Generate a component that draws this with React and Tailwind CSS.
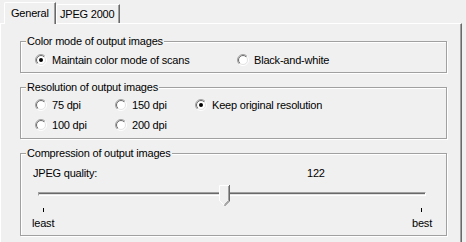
import React from "react";

const Radio = ({ checked }) => (
  <svg width="12" height="12" viewBox="0 0 12 12" className="shrink-0">
    <defs>
      <linearGradient id="rOuter" x1="0" y1="0" x2="1" y2="1">
        <stop offset="0.5" stopColor="#a0a0a0" />
        <stop offset="0.5" stopColor="#ffffff" />
      </linearGradient>
      <linearGradient id="rInner" x1="0" y1="0" x2="1" y2="1">
        <stop offset="0.5" stopColor="#696969" />
        <stop offset="0.5" stopColor="#e3e3e3" />
      </linearGradient>
    </defs>
    <circle cx="6" cy="6" r="5.5" fill="none" stroke="url(#rOuter)" />
    <circle cx="6" cy="6" r="4.5" fill="#ffffff" stroke="url(#rInner)" />
    {checked && <circle cx="6" cy="6" r="2" fill="#000000" />}
  </svg>
);

const Option = ({ label, checked, width }) => (
  <div className={`flex h-[12px] items-center ${width}`}>
    <Radio checked={checked} />
    <span className="ml-[5px] whitespace-nowrap leading-[13px]">{label}</span>
  </div>
);

const Group = ({ label, className, children }) => (
  <div
    className={`relative w-[427px] border border-[#a0a0a0] shadow-[inset_1px_1px_0_#fff,1px_1px_0_#fff] ${className}`}
  >
    <span className="absolute left-[5px] top-[-7px] whitespace-nowrap bg-[#f0f0f0] px-px leading-[13px]">
      {label}
    </span>
    {children}
  </div>
);

const Thumb = () => (
  <svg width="11" height="22" viewBox="0 0 11 22">
    <polygon points="0,0 11,0 11,16 5.5,21.5 0,16" fill="#f0f0f0" />
    <polyline points="0.5,16 0.5,0.5 10,0.5" stroke="#ffffff" fill="none" />
    <polyline points="0.5,15.5 5.5,20.5" stroke="#ffffff" fill="none" />
    <polyline points="9.5,1 9.5,15.6 5.5,19.6" stroke="#a0a0a0" fill="none" />
    <polyline points="10.5,0 10.5,16 5.5,21" stroke="#696969" fill="none" />
  </svg>
);

export default function App() {
  const value = 122;
  const thumbLeft = Math.round((value / 255) * 378);

  return (
    <div className="h-[242px] w-[466px] overflow-hidden bg-[#f0f0f0] font-['Liberation_Sans',Arial,sans-serif] text-[11px] leading-[13px] tracking-[-0.2px] text-black">
      {/* Tabs */}
      <div className="relative z-10 -mb-px flex h-[24px] items-end pl-[4px]">
        <div className="h-[22px] w-[52px] rounded-tl-[2px] border-l border-t border-r border-white border-r-[#696969] bg-[#f0f0f0] pl-[6px] pt-[4px] shadow-[inset_-1px_0_0_#a0a0a0]">
          General
        </div>
        <div className="mb-px h-[19px] w-[64px] rounded-tl-[2px] border-l border-t border-r border-white border-r-[#696969] pl-[3px] pt-[3px] shadow-[inset_-1px_0_0_#a0a0a0]">
          JPEG 2000
        </div>
      </div>

      {/* Panel */}
      <div className="flex h-[219px] w-[462px] flex-col gap-[14px] border-l border-t border-r border-white border-r-[#696969] pl-[19px] pt-[17px] shadow-[inset_-1px_0_0_#a0a0a0]">
        <Group label="Color mode of output images" className="h-[32px]">
          <div className="flex pl-[14px] pt-[12px]">
            <Option label="Maintain color mode of scans" checked width="w-[202px]" />
            <Option label="Black-and-white" width="w-[150px]" />
          </div>
        </Group>

        <Group label="Resolution of output images" className="h-[52px]">
          <div className="flex flex-col gap-[8px] pl-[14px] pt-[11px]">
            <div className="flex">
              <Option label="75 dpi" width="w-[80px]" />
              <Option label="150 dpi" width="w-[80px]" />
              <Option label="Keep original resolution" checked width="w-[180px]" />
            </div>
            <div className="flex">
              <Option label="100 dpi" width="w-[80px]" />
              <Option label="200 dpi" width="w-[80px]" />
            </div>
          </div>
        </Group>

        <Group label="Compression of output images" className="h-[83px]">
          <div className="flex flex-col">
            <div className="ml-[12px] mt-[13px] flex h-[13px]">
              <span className="w-[274px]">JPEG quality:</span>
              <span>{value}</span>
            </div>
            <div className="relative ml-[17px] mt-[5px] h-[22px] w-[388px] pt-[7px]">
              <div className="h-[4px] w-full border border-[#a0a0a0] border-b-white border-r-white bg-[#e3e3e3] shadow-[inset_0_1px_0_#696969]" />
              <div className="absolute top-0" style={{ left: thumbLeft }}>
                <Thumb />
              </div>
            </div>
            <div className="ml-[17px] mt-[1px] flex h-[4px] w-[388px] justify-between pl-[5px] pr-[4px]">
              <div className="h-[4px] w-px bg-black" />
              <div className="h-[4px] w-px bg-black" />
            </div>
            <div className="ml-[11px] mt-[5px] flex h-[13px] w-[400px] justify-between">
              <span>least</span>
              <span>best</span>
            </div>
          </div>
        </Group>
      </div>
    </div>
  );
}
